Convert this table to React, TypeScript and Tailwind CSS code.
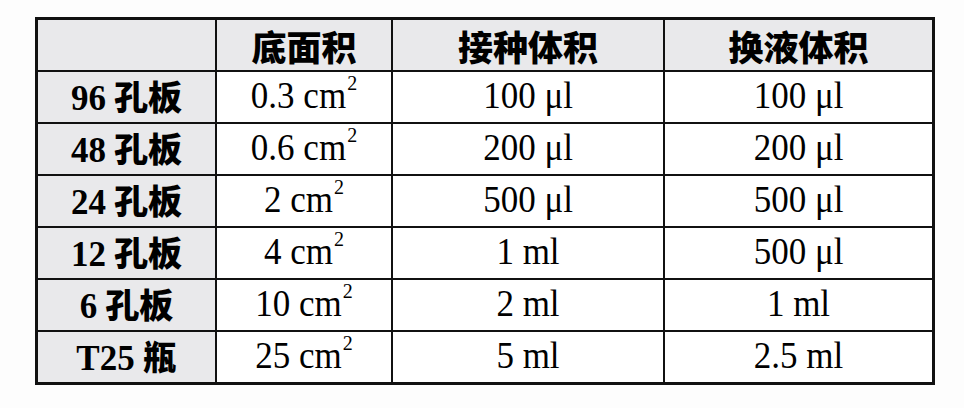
const serif = "font-['Liberation_Serif','Noto_Sans_CJK_SC',serif]";

type Row = {
  label: string;
  area: string;
  seed: string;
  change: string;
};

const rows: Row[] = [
  { label: "96 孔板", area: "0.3 cm", seed: "100 μl", change: "100 μl" },
  { label: "48 孔板", area: "0.6 cm", seed: "200 μl", change: "200 μl" },
  { label: "24 孔板", area: "2 cm", seed: "500 μl", change: "500 μl" },
  { label: "12 孔板", area: "4 cm", seed: "1 ml", change: "500 μl" },
  { label: "6 孔板", area: "10 cm", seed: "2 ml", change: "1 ml" },
  { label: "T25 瓶", area: "25 cm", seed: "5 ml", change: "2.5 ml" },
];

function Label({ text }: { text: string }) {
  const [num, cjk] = text.split(" ");
  return (
    <span className="flex items-baseline gap-[8px]">
      <span className="font-['Liberation_Serif',serif] text-[35px] font-bold leading-none">{num}</span>
      <span className="font-['Noto_Sans_CJK_SC',sans-serif] text-[34px] font-black leading-none">{cjk}</span>
    </span>
  );
}

function Value({ children }: { children: React.ReactNode }) {
  return <span className="inline-block origin-bottom scale-y-110">{children}</span>;
}

export default function App() {
  const cell = "flex items-center justify-center text-black";
  const value = `${cell} ${serif} bg-white text-[35px] leading-none`;
  return (
    <div className="h-[408px] w-[964px] bg-[#fdfdfd] pl-[35px] pt-[17px]">
      <div className="grid w-[900px] grid-cols-[177px_174px_270px_267px] grid-rows-[repeat(7,50px)] gap-[2px] border-[3px] border-[#111] bg-[#111]">
        <div className="bg-[#e9e9eb]" />
        {["底面积", "接种体积", "换液体积"].map((h) => (
          <div
            key={h}
            className={`${cell} bg-[#e9e9eb] font-['Noto_Sans_CJK_SC',sans-serif] text-[35px] font-black leading-none`}
          >
            {h}
          </div>
        ))}
        {rows.map((r) => (
          <div key={r.label} className="contents">
            <div className={`${cell} bg-[#e9e9eb] pt-[1px]`}>
              <Label text={r.label} />
            </div>
            <div className={value}>
              <Value>
                {r.area}
                <span className="relative -top-[17px] ml-[1px] text-[20px]">2</span>
              </Value>
            </div>
            <div className={value}>
              <Value>{r.seed}</Value>
            </div>
            <div className={value}>
              <Value>{r.change}</Value>
            </div>
          </div>
        ))}
      </div>
    </div>
  );
}
